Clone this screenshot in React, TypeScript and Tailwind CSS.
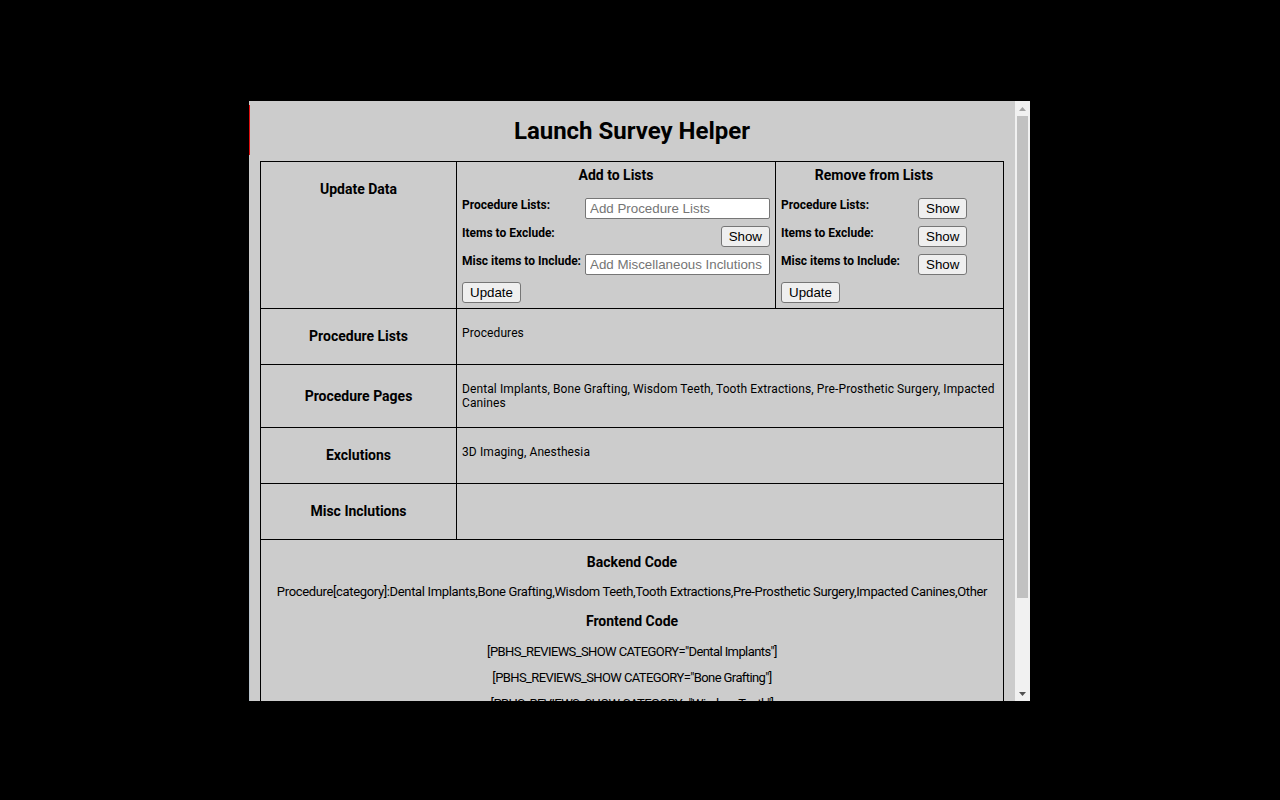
const procedurePages = [
  "Dental Implants",
  "Bone Grafting",
  "Wisdom Teeth",
  "Tooth Extractions",
  "Pre-Prosthetic Surgery",
  "Impacted Canines",
  "Other",
];

const Button = ({ label }: { label: string }) => (
  <button className="h-[21px] bg-[#efefef] border border-[#767676] rounded-[3px] px-[7px] text-[13.33px] leading-none text-black font-['Liberation_Sans',Arial,sans-serif]">
    {label}
  </button>
);

const TextInput = ({ placeholder }: { placeholder: string }) => (
  <input
    type="text"
    placeholder={placeholder}
    className="h-[21px] w-[185px] bg-white border border-[#767676] rounded-[2px] pl-[4px] text-[13.33px] text-black placeholder:text-[#757575] font-['Liberation_Sans',Arial,sans-serif] outline-none"
  />
);

const Label = ({ children }: { children: string }) => (
  <span className="h-[21px] text-[12px] leading-[14px] font-bold">{children}</span>
);

const Cell = ({ children }: { children: React.ReactNode }) => (
  <div className="flex h-[21px]">{children}</div>
);

// fake classic scrollbar, the page's own bar is hidden in the capture
const Scrollbar = () => (
  <div className="w-[15px] h-full bg-[#f1f1f1] flex flex-col shrink-0">
    <div className="h-[15px] flex items-center justify-center">
      <svg width="7" height="4" viewBox="0 0 7 4">
        <path d="M0 4 L3.5 0 L7 4 Z" fill="#a3a3a3" />
      </svg>
    </div>
    <div className="flex-1 px-[2px]">
      <div className="h-[482px] bg-[#c1c1c1]" />
    </div>
    <div className="h-[15px] flex items-center justify-center">
      <svg width="7" height="4" viewBox="0 0 7 4">
        <path d="M0 0 L7 0 L3.5 4 Z" fill="#505050" />
      </svg>
    </div>
  </div>
);

const App = () => {
  return (
    <div className="h-screen bg-black pt-[101px] pl-[249px]">
      <div className="relative w-[781px] h-[600px] flex">
        {/* thin left edge */}
        <div className="absolute z-10 left-0 top-[4px] w-[1px] h-[50px] bg-[#e01010]" />
        <div className="absolute z-10 left-0 top-[190px] w-[1px] h-[410px] bg-[#b9c3cb]" />

        <div className="w-[766px] h-full overflow-hidden bg-[#cccccc] pl-[11px] text-black font-['Roboto',sans-serif]">
          <h1 className="mt-[16px] mb-[15px] w-[744px] h-[29px] leading-[29px] text-center text-[24px] font-bold">
            Launch Survey Helper
          </h1>

          <div className="w-[744px] grid grid-cols-[196px_319px_228px] border-l border-t border-black">
            {/* Update data row */}
            <div className="h-[147px] border-r border-b border-black pt-[19px] text-center text-[14px] leading-[17px] font-bold">
              Update Data
            </div>

            <div className="h-[147px] border-r border-b border-black px-[5px] pt-[5px]">
              <h3 className="text-center text-[14px] leading-[17px] font-bold mb-[14px]">
                Add to Lists
              </h3>
              <div className="grid grid-cols-[123px_185px] gap-y-[7px]">
                <Label>Procedure Lists:</Label>
                <Cell>
                  <TextInput placeholder="Add Procedure Lists" />
                </Cell>
                <Label>Items to Exclude:</Label>
                <div className="flex h-[21px] justify-end">
                  <Button label="Show" />
                </div>
                <Label>Misc items to Include:</Label>
                <Cell>
                  <TextInput placeholder="Add Miscellaneous Inclutions" />
                </Cell>
                <div className="col-span-2 flex h-[21px]">
                  <Button label="Update" />
                </div>
              </div>
            </div>

            <div className="h-[147px] border-r border-b border-black px-[5px] pt-[5px]">
              <div className="w-[186px]">
                <h3 className="text-center text-[14px] leading-[17px] font-bold mb-[14px]">
                  Remove from Lists
                </h3>
                <div className="grid grid-cols-[137px_49px] gap-y-[7px]">
                  <Label>Procedure Lists:</Label>
                  <Cell>
                    <Button label="Show" />
                  </Cell>
                  <Label>Items to Exclude:</Label>
                  <Cell>
                    <Button label="Show" />
                  </Cell>
                  <Label>Misc items to Include:</Label>
                  <Cell>
                    <Button label="Show" />
                  </Cell>
                  <div className="col-span-2 flex h-[21px]">
                    <Button label="Update" />
                  </div>
                </div>
              </div>
            </div>

            {/* Data rows */}
            {[
              { title: "Procedure Lists", value: "Procedures", h: "h-[56px]" },
              {
                title: "Procedure Pages",
                value: procedurePages.slice(0, 6).join(", "),
                h: "h-[63px]",
              },
              { title: "Exclutions", value: "3D Imaging, Anesthesia", h: "h-[56px]" },
              { title: "Misc Inclutions", value: "", h: "h-[56px]" },
            ].map((row) => (
              <div key={row.title} className="contents">
                <div
                  className={`${row.h} border-r border-b border-black flex items-center justify-center text-[14px] font-bold`}
                >
                  {row.title}
                </div>
                <div
                  className={`${row.h} col-span-2 border-r border-b border-black px-[5px] pt-[17px] text-[12px] leading-[14px] tracking-[0.1px]`}
                >
                  {row.value}
                </div>
              </div>
            ))}

            {/* Code output */}
            <div className="col-span-3 border-r border-b border-black pt-[14px] pb-[14px] text-center">
              <h3 className="text-[14px] leading-[17px] font-bold">Backend Code</h3>
              <p className="mt-[12px] text-[13px] leading-[17px] tracking-[-0.35px]">
                Procedure[category]:{procedurePages.join(",")}
              </p>
              <h3 className="mt-[13px] text-[14px] leading-[17px] font-bold">Frontend Code</h3>
              <div className="mt-[13px] flex flex-col gap-[9px] text-[13px] leading-[17px] tracking-[-0.6px]">
                {procedurePages.map((p) => (
                  <p key={p}>[PBHS_REVIEWS_SHOW CATEGORY="{p}"]</p>
                ))}
              </div>
            </div>
          </div>
        </div>

        <Scrollbar />
      </div>
    </div>
  );
};

export default App;
